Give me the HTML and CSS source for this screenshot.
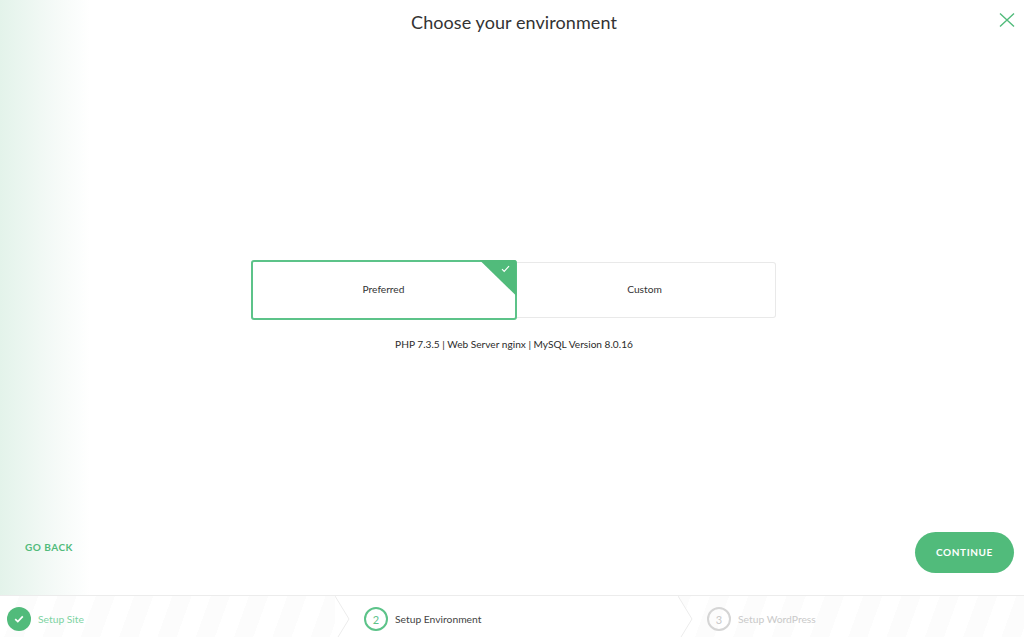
FILE: index.html
```html
<!DOCTYPE html>
<html lang="en">
<head>
<meta charset="utf-8">
<title>Choose your environment</title>
<link rel="stylesheet" href="styles.css">
</head>
<body>
<main class="main">
  <header class="header">
    <h1 class="title">Choose your environment</h1>
    <button class="close" aria-label="Close">
      <svg width="16" height="16" viewBox="0 0 16 16"><path d="M1 1.5 15 14.5M15 1.5 1 14.5" fill="none" stroke="#51bb7b" stroke-width="1.4"/></svg>
    </button>
  </header>
  <section class="chooser">
    <div class="cards">
      <div class="card card-active">
        <span class="corner">
          <svg class="corner-check" width="9" height="8" viewBox="0 0 9 8"><path d="M1 4.2 3.2 6.4 8 1.2" fill="none" stroke="#fff" stroke-width="1.2"/></svg>
        </span>
        Preferred
      </div>
      <div class="card card-plain">Custom</div>
    </div>
    <p class="info">PHP 7.3.5 | Web Server nginx | MySQL Version 8.0.16</p>
  </section>
  <div class="actions">
    <a class="back">GO BACK</a>
    <button class="continue">CONTINUE</button>
  </div>
</main>
<footer class="steps">
  <div class="step step-done">
    <span class="badge badge-done">
      <svg width="10" height="8" viewBox="0 0 10 8"><path d="M1.2 4.2 3.8 6.6 8.8 1.4" fill="none" stroke="#fff" stroke-width="1.7"/></svg>
    </span>
    <span class="step-label">Setup Site</span>
    <svg class="chevron" width="15" height="46" viewBox="0 0 15 46"><path d="M0 0 14 23 0 46" fill="#fff" stroke="#ececec"/></svg>
  </div>
  <div class="step step-current">
    <span class="badge badge-current">2</span>
    <span class="step-label">Setup Environment</span>
    <svg class="chevron" width="15" height="46" viewBox="0 0 15 46"><path d="M0 0 14 23 0 46" fill="#fff" stroke="#ececec"/></svg>
  </div>
  <div class="step step-todo">
    <span class="badge badge-todo">3</span>
    <span class="step-label">Setup WordPress</span>
  </div>
</footer>
</body>
</html>
```

FILE: styles.css
```css
* { box-sizing: border-box; }
html, body { margin: 0; height: 100%; }
body {
  width: 1024px;
  height: 637px;
  overflow: hidden;
  display: flex;
  flex-direction: column;
  background: #fff;
  color: #333;
  font-family: "Lato", "Open Sans", sans-serif;
}
.main {
  flex: 1;
  min-height: 0;
  display: flex;
  flex-direction: column;
  background: linear-gradient(90deg, #e3f3ea 0, #f3f9f6 48px, #fff 90px);
}
.header {
  position: relative;
  height: 45px;
  padding: 0 0 2px 4px;
  display: flex;
  align-items: center;
  justify-content: center;
}
.title {
  margin: 0;
  font-size: 18px;
  font-weight: 400;
  color: #333;
  letter-spacing: .08px;
}
.close {
  position: absolute;
  top: 12px;
  right: 9px;
  width: 16px;
  height: 16px;
  padding: 0;
  border: 0;
  background: none;
  display: flex;
}
.chooser {
  flex: 1;
  min-height: 0;
  display: flex;
  flex-direction: column;
  align-items: center;
  padding: 215px 0 0 2px;
}
.cards { display: flex; align-items: center; }
.card {
  position: relative;
  width: 259px;
  height: 56px;
  padding-bottom: 2px;
  display: flex;
  align-items: center;
  justify-content: center;
  border: 1px solid #e9e9e9;
  border-left: 0;
  border-radius: 0 3px 3px 0;
  font-size: 10.2px;
  color: #333;
}
.card-plain { padding-right: 2px; }
.card-active {
  width: 266px;
  height: 60px;
  border: 2px solid #5cc389;
  border-radius: 3px;
}
.corner {
  position: absolute;
  top: -2px;
  right: -2px;
  width: 37px;
  height: 36px;
  background: #51bb7b;
  border-top-right-radius: 3px;
  clip-path: polygon(0 0, 100% 0, 100% 100%);
}
.corner-check { position: absolute; top: 5px; right: 7px; }
.info {
  margin: 17px 0 0;
  padding-left: 2px;
  font-size: 10.15px;
  line-height: 14px;
  color: #2b2b2b;
}
.actions {
  display: flex;
  align-items: center;
  justify-content: space-between;
  padding: 0 10px 22px 25px;
}
.back {
  margin-bottom: 12px;
  font-size: 10px;
  font-weight: 700;
  letter-spacing: .5px;
  color: #51bb7b;
}
.continue {
  width: 99px;
  height: 41px;
  padding: 0 0 2px;
  border: 0;
  border-radius: 21px;
  background: #51bb7b;
  color: #fff;
  font-family: inherit;
  font-size: 10px;
  font-weight: 700;
  letter-spacing: .6px;
}
.steps {
  height: 42px;
  flex: none;
  display: flex;
  overflow: hidden;
  border-top: 1px solid #ececec;
  background: #fff;
}
.step {
  position: relative;
  display: flex;
  align-items: center;
  gap: 7px;
  padding-top: 5px;
  font-size: 10.3px;
}
.step-done {
  width: 335px;
  padding-left: 7px;
  color: #7dd3a2;
  background: repeating-linear-gradient(110deg, #fff 0 18px, #fcfcfc 18px 36px);
}
.step-current {
  width: 343px;
  padding-left: 29px;
  color: #444;
}
.step-todo {
  flex: 1;
  padding-left: 29px;
  color: #c9c9c9;
  background: repeating-linear-gradient(110deg, #fcfcfc 0 12px, #fff 12px 30px, #fcfcfc 30px 36px);
}
.badge {
  width: 24px;
  height: 24px;
  flex: none;
  display: flex;
  align-items: center;
  justify-content: center;
  border-radius: 50%;
  font-size: 11px;
}
.badge-done { background: #51bb7b; }
.badge-current { border: 2px solid #5cc389; color: #5cc389; }
.badge-todo { border: 2px solid #d5d5d5; color: #c9c9c9; }
.chevron {
  position: absolute;
  top: 0;
  left: 100%;
  z-index: 1;
}
```
